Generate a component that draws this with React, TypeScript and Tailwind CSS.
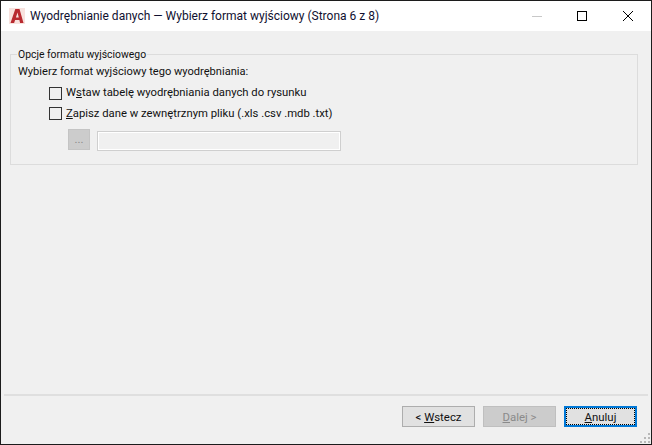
const font = { fontFamily: 'Roboto, "Noto Sans", sans-serif' };

function Check({ children }: { children: React.ReactNode }) {
  return (
    <div className="flex h-[20.5px] items-center gap-[4px] pl-[31px]">
      <span className="h-[13px] w-[13px] shrink-0 border border-[#333333] bg-[#f0f0f0]" />
      <span>{children}</span>
    </div>
  );
}

function Btn({ children, cls }: { children: React.ReactNode; cls: string }) {
  return (
    <div className={`flex h-[21px] w-[73px] items-center justify-center ${cls}`}>{children}</div>
  );
}

export default function App() {
  return (
    <div
      className="relative flex h-[445px] w-[652px] flex-col overflow-hidden border border-[#1c1c1c] bg-[#f0f0f0] text-[11.3px] leading-4 text-[#111111]"
      style={font}
    >
      <header className="flex h-[30px] shrink-0 items-center bg-white pl-[8px]">
        <svg width="16" height="16" viewBox="0 0 16 16" className="mr-[5px] shrink-0">
          <rect width="16" height="16" fill="#f8e2de" />
          <path d="M1.5 15 6.3 1h4.2l4 14h-3.4l-.7-3H6.1l-1 3zM6.9 9.6h2.9L8.5 4.5z" fill="#b82a30" fillRule="evenodd" />
        </svg>
        <span className="text-[12px] text-[#101030]">Wyodrębnianie danych — Wybierz format wyjściowy (Strona 6 z 8)</span>
        <div className="ml-auto flex items-center pr-[18px]">
          <svg width="10" height="10" viewBox="0 0 10 10" className="mr-[35px]">
            <path d="M0 5.5h10" stroke="#c8c8c8" />
          </svg>
          <svg width="10" height="10" viewBox="0 0 10 10" className="mr-[36px]">
            <rect x=".5" y=".5" width="9" height="9" fill="none" stroke="#000000" />
          </svg>
          <svg width="10" height="10" viewBox="0 0 10 10">
            <path d="M0 0l10 10M10 0 0 10" stroke="#000000" strokeWidth="1" />
          </svg>
        </div>
      </header>

      <main className="flex flex-1 flex-col pl-[9px] pr-[13px] pt-[16px]">
        <fieldset className="h-[118px] border border-[#dcdcdc] px-[7px]">
          <legend className="ml-[-1px] px-[1px] text-[10.4px] leading-[15px]">Opcje formatu wyjściowego</legend>
          <p className="mt-[2px] h-[19px] text-[11.1px] leading-[16px]">Wybierz format wyjściowy tego wyodrębniania:</p>
          <Check>W<u>s</u>taw tabelę wyodrębniania danych do rysunku</Check>
          <Check><u>Z</u>apisz dane w zewnętrznym pliku (.xls .csv .mdb .txt)</Check>
          <div className="mt-[5px] flex items-start gap-[7px] pl-[50px]">
            <div className="flex h-[21px] w-[22px] items-center justify-center border border-[#c4c4c4] bg-[#cccccc] text-[#8a8a8a]">...</div>
            <div className="mt-[2px] h-[20px] w-[244px] border border-[#cfcfcf] bg-[#f0f0f0] shadow-[inset_0_0_0_1px_#ffffff]" />
          </div>
        </fieldset>
      </main>

      <div className="mx-[3px] h-[2px] shrink-0 bg-[#dfdfdf]" />

      <footer className="flex h-[48px] shrink-0 justify-end gap-[8px] pr-[14px] pt-[10px] text-[11.4px]">
        <Btn cls="border border-[#adadad] bg-[#e1e1e1]">&lt;&nbsp;<u>W</u>stecz</Btn>
        <Btn cls="border border-[#bfbfbf] bg-[#cccccc] text-[#8a8a8a]"><u>D</u>alej &gt;</Btn>
        <Btn cls="border-2 border-[#0078d7] bg-[#e1e1e1] outline-1 -outline-offset-3 outline-dotted outline-black"><u>A</u>nuluj</Btn>
      </footer>

      <svg width="12" height="12" viewBox="0 0 12 12" className="absolute bottom-0 right-0" fill="#b8b8b8">
        <rect x="9" y="1" width="2" height="2" />
        <rect x="5" y="5" width="2" height="2" />
        <rect x="9" y="5" width="2" height="2" />
        <rect x="1" y="9" width="2" height="2" />
        <rect x="5" y="9" width="2" height="2" />
        <rect x="9" y="9" width="2" height="2" />
      </svg>
    </div>
  );
}
